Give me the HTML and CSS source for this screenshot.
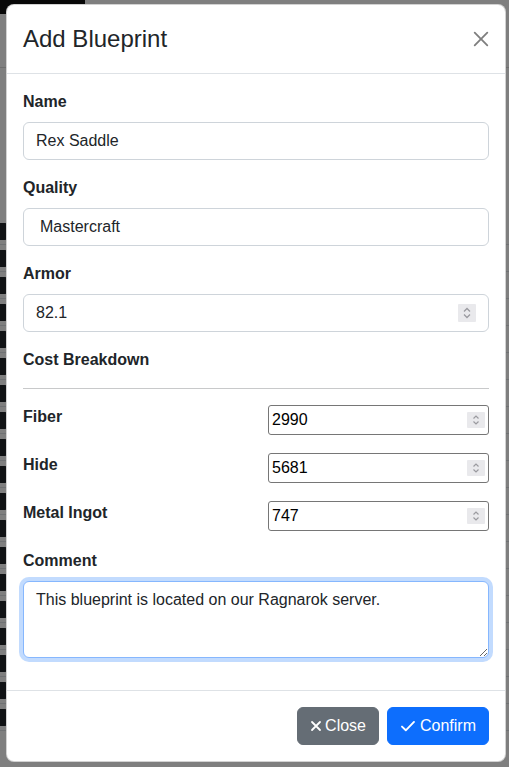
FILE: index.html
```html
<!DOCTYPE html>
<html lang="en">
<head>
<meta charset="utf-8">
<title>Add Blueprint</title>
<link rel="stylesheet" href="styles.css">
</head>
<body>
<div class="page">
  <div class="page-bar"></div>
  <div class="table">
    <div class="trow"><span class="badge"></span></div>
    <div class="trow"><span class="badge"></span></div>
    <div class="trow"><span class="badge"></span></div>
    <div class="trow"><span class="badge"></span></div>
    <div class="trow"><span class="badge"></span></div>
    <div class="trow"><span class="badge"></span></div>
    <div class="trow"><span class="badge"></span></div>
    <div class="trow"><span class="badge"></span></div>
    <div class="trow"><span class="badge"></span></div>
    <div class="trow"><span class="badge"></span></div>
    <div class="trow"><span class="badge"></span></div>
    <div class="trow"><span class="badge"></span></div>
    <div class="trow"><span class="badge"></span></div>
    <div class="trow"><span class="badge"></span></div>
    <div class="trow"><span class="badge"></span></div>
    <div class="trow"><span class="badge"></span></div>
    <div class="trow"><span class="badge"></span></div>
    <div class="trow"><span class="badge"></span></div>
    <div class="trow"><span class="badge"></span></div>
  </div>
</div>
<div class="backdrop"></div>

<div class="modal">
  <div class="modal-header">
    <h4 class="modal-title">Add Blueprint</h4>
    <button class="btn-close" type="button" aria-label="Close">
      <svg viewBox="0 0 16 16" width="16" height="16"><path d="M.293.293a1 1 0 0 1 1.414 0L8 6.586 14.293.293a1 1 0 1 1 1.414 1.414L9.414 8l6.293 6.293a1 1 0 0 1-1.414 1.414L8 9.414l-6.293 6.293a1 1 0 0 1-1.414-1.414L6.586 8 .293 1.707a1 1 0 0 1 0-1.414z" transform="translate(8 8) scale(0.9) translate(-8 -8)"/></svg>
    </button>
  </div>
  <div class="modal-body">
    <div class="field">
      <label class="form-label">Name</label>
      <input class="form-control" type="text" value="Rex Saddle">
    </div>
    <div class="field">
      <label class="form-label">Quality</label>
      <select class="form-control form-select"><option>Mastercraft</option></select>
    </div>
    <div class="field">
      <label class="form-label">Armor</label>
      <div class="num-wrap">
        <input class="form-control" type="text" value="82.1">
        <span class="spin spin-lg"><svg viewBox="0 0 18 18" width="18" height="18"><rect width="18" height="18" rx="1" fill="#e9e9ec"/><polyline points="6,7.5 9,4.5 12,7.5" fill="none" stroke="#9a9a9f" stroke-width="1.3"/><polyline points="6,10.5 9,13.5 12,10.5" fill="none" stroke="#9a9a9f" stroke-width="1.3"/></svg></span>
      </div>
    </div>
    <div class="section-title">Cost Breakdown</div>
    <hr class="divider">
    <div class="cost-row">
      <label class="cost-label">Fiber</label>
      <div class="num-wrap">
        <input class="num-input" type="text" value="2990">
        <span class="spin spin-sm"><svg viewBox="0 0 18 16" width="18" height="16"><rect width="18" height="16" rx="1" fill="#e9e9ec"/><polyline points="6.5,6.5 9,4 11.5,6.5" fill="none" stroke="#9a9a9f" stroke-width="1.2"/><polyline points="6.5,9.5 9,12 11.5,9.5" fill="none" stroke="#9a9a9f" stroke-width="1.2"/></svg></span>
      </div>
    </div>
    <div class="cost-row">
      <label class="cost-label">Hide</label>
      <div class="num-wrap">
        <input class="num-input" type="text" value="5681">
        <span class="spin spin-sm"><svg viewBox="0 0 18 16" width="18" height="16"><rect width="18" height="16" rx="1" fill="#e9e9ec"/><polyline points="6.5,6.5 9,4 11.5,6.5" fill="none" stroke="#9a9a9f" stroke-width="1.2"/><polyline points="6.5,9.5 9,12 11.5,9.5" fill="none" stroke="#9a9a9f" stroke-width="1.2"/></svg></span>
      </div>
    </div>
    <div class="cost-row">
      <label class="cost-label">Metal Ingot</label>
      <div class="num-wrap">
        <input class="num-input" type="text" value="747">
        <span class="spin spin-sm"><svg viewBox="0 0 18 16" width="18" height="16"><rect width="18" height="16" rx="1" fill="#e9e9ec"/><polyline points="6.5,6.5 9,4 11.5,6.5" fill="none" stroke="#9a9a9f" stroke-width="1.2"/><polyline points="6.5,9.5 9,12 11.5,9.5" fill="none" stroke="#9a9a9f" stroke-width="1.2"/></svg></span>
      </div>
    </div>
    <div class="field">
      <label class="form-label">Comment</label>
      <textarea class="form-control comment">This blueprint is located on our Ragnarok server.</textarea>
    </div>
  </div>
  <div class="modal-footer">
    <button class="btn btn-secondary" type="button"><svg class="btn-icon x-icon" viewBox="0 0 12 12" width="12" height="12"><path d="M2 2 L10 10 M10 2 L2 10" stroke="#fff" stroke-width="1.8" stroke-linecap="round"/></svg>Close</button>
    <button class="btn btn-primary" type="button"><svg class="btn-icon check-icon" viewBox="0 0 16 16" width="16" height="16"><polyline points="2,8.6 5.8,12.3 14,3.9" fill="none" stroke="#fff" stroke-width="1.9" stroke-linecap="round" stroke-linejoin="round"/></svg>Confirm</button>
  </div>
</div>
</body>
</html>
```

FILE: styles.css
```css
* { box-sizing: border-box; }

html, body {
  margin: 0;
  padding: 0;
  width: 509px;
  height: 767px;
  overflow: hidden;
}

body {
  font-family: "Liberation Sans", Arial, Helvetica, sans-serif;
  color: #212529;
  background: #fff;
  position: relative;
}

/* ---------- page behind the modal ---------- */
.page {
  margin-left: -14px;
  border-top: 14px solid #111;
  border-image: linear-gradient(to right, #111 0 100px, transparent 100px) 1;
}

.page-bar {
  height: 54px;
  border-bottom: 1px solid #ddd;
}

.table {
  margin-top: 150px;
}

.trow {
  height: 27px;
  display: flex;
  align-items: center;
  border-bottom: 1px solid #dee2e6;
}

.badge {
  width: 22px;
  height: 17px;
  background: #212529;
  border-radius: 3px;
}

.backdrop {
  position: absolute;
  inset: 0;
  background: rgba(0, 0, 0, 0.5);
}

/* ---------- modal ---------- */
.modal {
  position: absolute;
  left: 6px;
  top: 4px;
  width: 500px;
  background: #fff;
  border: 1px solid rgba(0, 0, 0, 0.175);
  border-radius: 8px;
  font-size: 16px;
  line-height: 24px;
}

.modal-header {
  display: flex;
  align-items: center;
  padding: 16px;
  border-bottom: 1px solid #dee2e6;
}

.modal-title {
  margin: 0;
  font-size: 24px;
  line-height: 36px;
  font-weight: 500;
  flex: 1;
}

.btn-close {
  width: 24px;
  height: 24px;
  padding: 4px;
  margin-right: -4px;
  border: 0;
  background: transparent;
  display: flex;
  align-items: center;
  justify-content: center;
  opacity: 0.5;
}

.btn-close svg { display: block; fill: #000; }

.modal-body {
  padding: 16px;
}

.field {
  margin-bottom: 16px;
}

.form-label {
  display: block;
  font-weight: 700;
  margin-bottom: 8px;
}

.form-control {
  display: block;
  width: 100%;
  height: 38px;
  padding: 6px 12px;
  font-family: inherit;
  font-size: 16px;
  line-height: 24px;
  color: #212529;
  background: #fff;
  border: 1px solid #ced4da;
  border-radius: 6px;
  outline: none;
}

.form-select {
  appearance: none;
  -webkit-appearance: none;
  padding-left: 16px;
}

.num-wrap {
  position: relative;
}

.spin {
  position: absolute;
  display: block;
  line-height: 0;
}

.spin-lg {
  right: 13px;
  top: 10px;
}

.spin-sm {
  right: 4px;
  top: 7px;
}

.section-title {
  font-weight: 700;
}

.divider {
  margin: 16px 0;
  border: 0;
  border-top: 1px solid #c8c9ca;
  height: 0;
}

.cost-row {
  display: grid;
  grid-template-columns: 1fr 1fr;
  column-gap: 24px;
  align-items: start;
  height: 32px;
  margin-bottom: 16px;
}

.cost-label {
  font-weight: 700;
}

.num-input {
  display: block;
  width: 100%;
  height: 30px;
  padding: 0 3px;
  font-family: inherit;
  font-size: 16px;
  color: #000;
  background: #fff;
  border: 1px solid #767676;
  border-radius: 3px;
  outline: none;
}

.comment {
  height: 77px;
  resize: vertical;
  border-color: #86b7fe;
  box-shadow: 0 0 0 4px rgba(13, 110, 253, 0.25);
}

.modal-footer {
  display: flex;
  justify-content: flex-end;
  gap: 8px;
  padding: 16px;
  border-top: 1px solid #dee2e6;
}

.btn {
  display: inline-flex;
  align-items: center;
  height: 38px;
  padding: 6px 12px;
  font-family: inherit;
  font-size: 16px;
  line-height: 24px;
  color: #fff;
  border: 1px solid transparent;
  border-radius: 6px;
}

.btn-secondary {
  background: #656d75;
  border-color: #656d75;
}

.btn-primary {
  background: #0d6efd;
  border-color: #0d6efd;
}

.btn-icon {
  display: block;
  flex: none;
}

.x-icon {
  margin-right: 3px;
}

.check-icon {
  margin-right: 4px;
}
```
